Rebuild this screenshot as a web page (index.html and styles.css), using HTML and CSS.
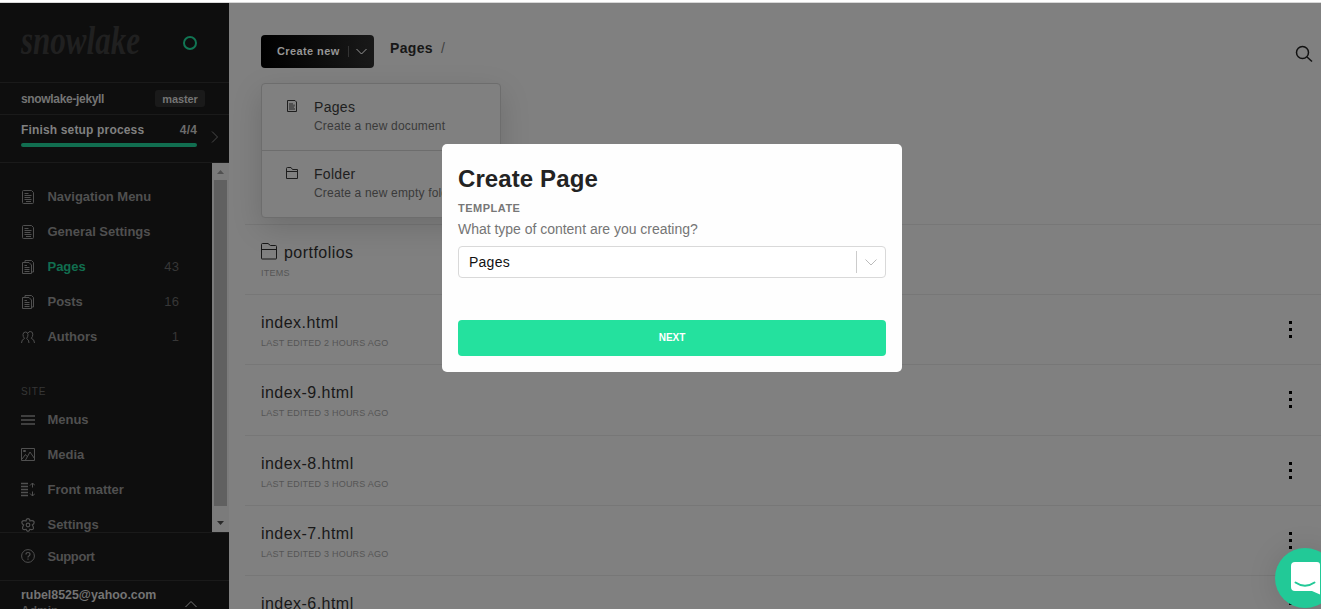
FILE: index.html
```
<!DOCTYPE html>
<html lang="en">
<head>
<meta charset="utf-8">
<title>Create Page</title>
<link rel="stylesheet" href="styles.css">
</head>
<body>
<svg class="defs" width="0" height="0" aria-hidden="true">
  <symbol id="i-doc" viewBox="0 0 14 16"><path d="M1.500 2.500q0-1 1-1h8l2 2v10q0 1-1 1h-9q-1 0-1-1z M3.500 4.500h4 M3.500 6.500h7 M3.500 8.500h6 M3.500 10.500h7 M5 12.500h5"/></symbol>
  <symbol id="i-docs" viewBox="0 0 14 16"><path d="M4 3.500V1.500h6.500l2 2v9.500h-2 M1.500 3.500h6.500l2.500 2.500v8.500h-9z M3.500 6.500h2.500 M3.500 8.500h5 M3.500 10.500h5 M3.500 12.500h5"/></symbol>
  <symbol id="i-folder" viewBox="0 0 18 18"><path d="M1.500 16.500V2.500q0-1 1-1H8l2.500 2h5q1 0 1 1v12q0 .5-.5.500H2q-.5 0-.5-.5z M1.500 7.500h15"/></symbol>
  <symbol id="i-folder-sm" viewBox="0 0 14 14"><path d="M1.500 12.500v-10q0-1 1-1H6l1.500 2h5v9z M1.500 5.500h11"/></symbol>
  <symbol id="i-dots" viewBox="0 0 3 18"><path d="M0 0h3v3H0z M0 7h3v3H0z M0 14h3v3H0z"/></symbol>
</svg>
<div class="app">
  <aside class="sidebar">
    <header class="brand">
      <svg class="logo" width="122" height="36" viewBox="0 0 122 36"><text x="1" y="29" textLength="119" lengthAdjust="spacingAndGlyphs">snowlake</text></svg>
      <span class="ring"></span>
    </header>
    <div class="repo"><span class="repo-name">snowlake-jekyll</span><span class="branch">master</span></div>
    <div class="setup">
      <div class="setup-body">
        <div class="setup-text"><span>Finish setup process</span><span class="count">4/4</span></div>
        <div class="progress"></div>
      </div>
      <svg class="chev" width="8" height="14" viewBox="0 0 8 14"><path d="M1 1.500l5.500 5.500L1 12.500"/></svg>
    </div>
    <div class="nav-wrap">
      <nav class="nav">
        <a class="item"><svg class="ic" width="14" height="16"><use href="#i-doc"/></svg><span>Navigation Menu</span></a>
        <a class="item"><svg class="ic" width="14" height="16"><use href="#i-doc"/></svg><span>General Settings</span></a>
        <a class="item active"><svg class="ic" width="14" height="16"><use href="#i-docs"/></svg><span>Pages</span><em>43</em></a>
        <a class="item"><svg class="ic" width="14" height="16"><use href="#i-docs"/></svg><span>Posts</span><em>16</em></a>
        <a class="item"><svg class="ic" width="14" height="14" viewBox="0 0 14 14"><path d="M.5 13q0-3.500 3-4.500Q1.800 6.500 2 4.500q.2-2.500 2.500-2.500T7 4.500Q7 7 5.600 8.500 8 9.500 8 13 M7 3q.8-1.500 2.300-1.500 2.400 0 2.500 2.700 0 2.500-1.500 4.100 3.200 1 3.200 4.700"/></svg><span>Authors</span><em>1</em></a>
        <h2 class="group">SITE</h2>
        <a class="item"><svg class="ic thick" width="14" height="12" viewBox="0 0 14 12"><path d="M0 2h14M0 6h14M0 10h14"/></svg><span>Menus</span></a>
        <a class="item"><svg class="ic" width="14" height="13" viewBox="0 0 14 13"><path d="M.5.500h13v12H.5z M1 11l3.500-4.500L6 8.500 M4.500 12L9 4l4.500 6.500 M2.500 3.500h2v-1h-2z"/></svg><span>Media</span></a>
        <a class="item"><svg class="ic" width="14" height="15" viewBox="0 0 14 15"><path class="lines" d="M0 1.500h7M0 4.500h7M0 7.500h7M0 10.500h7M0 13.500h7"/><path d="M11.500 5.500V1 M9 3.500L11.500 1 14 3.500 M11.500 9.500V14 M9 11.500l2.500 2.500 2.500-2.500"/></svg><span>Front matter</span></a>
        <a class="item"><svg class="ic gear" width="14" height="14" viewBox="0 0 14 14"><path d="M5 3Q5.300.7 7 .7T9 3q3-.8 4 .7.600 2-1.700 3.300 1.700 2.500 1 3.800-1.300 1.300-3.300.5-.7 2-2 2t-2-2q-2 .8-3.300-.5-.7-1.300 1-3.800Q.400 5.700 1 3.700 2 2.200 5 3z"/><circle cx="7" cy="7" r="1.800"/></svg><span>Settings</span></a>
      </nav>
      <div class="scrollbar">
        <svg width="15" height="17" viewBox="0 0 15 17"><path class="up" d="M4 11h7L7.500 7z"/></svg>
        <div class="thumb"></div>
        <svg width="15" height="26" viewBox="0 0 15 26"><path class="down" d="M4 15h7l-3.500 4z"/></svg>
      </div>
    </div>
    <div class="support"><svg class="ic" width="14" height="14" viewBox="0 0 14 14"><circle cx="7" cy="7" r="6.400"/><path class="q" d="M5 5.500q0-2 2-2t2 1.700Q9 6.300 7.800 7 7 7.400 7 8.500M7 9.500v1.300"/></svg><span>Support</span></div>
    <div class="user"><div><div class="mail">rubel8525@yahoo.com</div><div class="role">Admin</div></div><svg width="12" height="8" viewBox="0 0 12 8"><path d="M.5 7L6 1.500 11.500 7"/></svg></div>
  </aside>
  <main class="main">
    <header class="toolbar">
      <div class="create">
        <button class="create-btn"><span>Create new</span><i></i><svg width="11" height="7" viewBox="0 0 11 7"><path d="M.5 1l5 5 5-5"/></svg></button>
        <div class="menu">
          <div class="menu-item"><svg class="mi-doc" width="14" height="14" viewBox="0 0 14 14"><path d="M2.500 1.500H10l1.500 1.500v9.500h-9z"/><path class="fill" d="M4 4h4v1.500h2v2H9v1.500h1V11H4z"/></svg><div><div class="mt">Pages</div><div class="ms">Create a new document</div></div></div>
          <div class="menu-item"><svg width="14" height="14"><use href="#i-folder-sm"/></svg><div><div class="mt">Folder</div><div class="ms">Create a new empty folder</div></div></div>
        </div>
      </div>
      <div class="crumb"><b>Pages</b><span>/</span></div>
      <svg class="search" width="18" height="18" viewBox="0 0 18 18"><circle cx="7.500" cy="7.500" r="6"/><path d="M12 12l5 4.500"/></svg>
    </header>
    <section class="list">
      <div class="row"><div><div class="title"><svg width="18" height="18"><use href="#i-folder"/></svg>portfolios</div><div class="meta">ITEMS</div></div></div>
      <div class="row"><div><div class="title">index.html</div><div class="meta">LAST EDITED 2 HOURS AGO</div></div><svg class="dots" width="3" height="18"><use href="#i-dots"/></svg></div>
      <div class="row"><div><div class="title">index-9.html</div><div class="meta">LAST EDITED 3 HOURS AGO</div></div><svg class="dots" width="3" height="18"><use href="#i-dots"/></svg></div>
      <div class="row"><div><div class="title">index-8.html</div><div class="meta">LAST EDITED 3 HOURS AGO</div></div><svg class="dots" width="3" height="18"><use href="#i-dots"/></svg></div>
      <div class="row"><div><div class="title">index-7.html</div><div class="meta">LAST EDITED 3 HOURS AGO</div></div><svg class="dots" width="3" height="18"><use href="#i-dots"/></svg></div>
      <div class="row"><div><div class="title">index-6.html</div></div><svg class="dots" width="3" height="18"><use href="#i-dots"/></svg></div>
    </section>
  </main>
</div>
<div class="modal">
  <h1>Create Page</h1>
  <div class="label">TEMPLATE</div>
  <div class="hint">What type of content are you creating?</div>
  <div class="select"><span>Pages</span><i></i><svg width="12" height="7" viewBox="0 0 12 7"><path d="M.5.500L6 6 11.500.500"/></svg></div>
  <button class="next">NEXT</button>
</div>
<div class="chat"><svg width="30" height="34" viewBox="0 0 30 34"><path class="bubble" d="M4 0h22q3 0 3 3v29.500L21 29H4q-4 0-4-4V4q0-4 4-4z"/><path class="smile" d="M4.500 20.500q9.500 6.500 19 0"/></svg></div>
</body>
</html>
```

FILE: styles.css
```
* { box-sizing: border-box; }
body { margin: 0; height: 609px; overflow: hidden; position: relative; background: #808080; font-family: "Liberation Sans", Arial, sans-serif; }
svg { display: block; flex: none; fill: none; stroke: currentColor; }
button { border: 0; font-family: inherit; }
.defs { position: absolute; }
.app { display: flex; height: 609px; border-top: 2px solid #fff; overflow: hidden; }
.sidebar { width: 229px; flex: none; display: flex; flex-direction: column; background: #0e0e0e; border-top: 1px solid #d8d8d8; color: #505050; }
.brand { height: 80px; flex: none; display: flex; justify-content: space-between; padding: 22px 32px 0 20px; border-bottom: 1px solid #1a1a1a; }
.logo { overflow: visible; color: #202020; }
.logo text { font: italic bold 40px "Liberation Serif", serif; fill: currentColor; stroke: none; }
.ring { width: 14px; height: 14px; margin-top: 11px; border: 2px solid #117553; border-radius: 50%; }
.repo { height: 32px; flex: none; display: flex; align-items: center; justify-content: space-between; padding: 0 24px 0 21px; border-bottom: 1px solid #1a1a1a; font-weight: bold; color: #747474; }
.repo-name { font-size: 12px; letter-spacing: -.33px; }
.branch { width: 50px; height: 17px; border-radius: 3px; background: #1a1a1a; text-align: center; font-size: 11px; line-height: 18px; letter-spacing: -.1px; }
.setup { height: 48px; flex: none; display: flex; padding: 8px 10px 0 21px; border-bottom: 1px solid #1a1a1a; }
.setup-body { width: 176px; }
.setup-text { display: flex; justify-content: space-between; font-size: 12px; line-height: 15px; font-weight: bold; letter-spacing: .16px; color: #808080; }
.count { color: #6c6c6c; }
.progress { height: 4px; margin-top: 5px; border-radius: 2px; background: #116e50; }
.chev { margin: 7px 0 0 14px; color: #484848; }
.nav-wrap { height: 369px; flex: none; display: flex; overflow: hidden; }
.nav { width: 212px; padding: 16px 33px 0 21px; }
.item { display: flex; align-items: center; height: 35px; gap: 12.500px; font-size: 13px; font-weight: bold; }
.item span, .support span { letter-spacing: -.02px; }
.item em { margin-left: auto; font-style: normal; font-weight: normal; font-size: 13px; letter-spacing: .1px; color: #373737; }
.item.active span { color: #116e50; }
.ic.thick { stroke-width: 1.500; }
.ic.gear, .ic .q { stroke-width: 1.200; }
.lines { stroke-width: 1.500; }
.group { height: 34px; margin: 14px 0 0; font-size: 10px; line-height: 48px; font-weight: normal; letter-spacing: .7px; color: #363636; }
.scrollbar { width: 17px; padding: 0 2px; background: #7b7b7b; }
.scrollbar svg { margin-left: -1px; stroke: none; }
.thumb { width: 13px; height: 326px; background: #606060; }
.up { fill: #515151; }
.down { fill: #292929; }
.support { height: 49px; flex: none; display: flex; align-items: center; gap: 12.500px; padding: 0 0 1px 21px; border-top: 1px solid #1a1a1a; border-bottom: 1px solid #1a1a1a; font-size: 13px; font-weight: bold; }
.support span { letter-spacing: -.4px; }
.user { display: flex; justify-content: space-between; padding: 7px 32px 0 21px; font-size: 12px; line-height: 15px; font-weight: bold; color: #747474; }
.user svg { margin-top: 12px; }
.mail { font-size: 12.400px; white-space: nowrap; }
.role { color: #505050; line-height: 16px; }
.main { flex: 1; min-width: 0; display: flex; flex-direction: column; border-top: 1px solid #d8d8d8; }
.toolbar { height: 221px; flex: none; display: flex; align-items: flex-start; padding: 32px 8px 0 32px; }
.create { position: relative; width: 113px; }
.create-btn { display: flex; align-items: center; width: 113px; height: 33px; padding: 0 7px 1px 16px; border-radius: 4px; background: linear-gradient(90deg, #000, #191919); color: #969696; font-size: 11px; font-weight: bold; letter-spacing: .4px; white-space: nowrap; }
.create-btn i { width: 1px; height: 11px; margin: 0 7px 0 8px; flex: none; background: #333; }
.menu { position: absolute; z-index: 2; top: 48px; left: 0; width: 240px; height: 135px; border: 1px solid #6d6d6d; border-radius: 4px; background: #808080; box-shadow: 0 10px 30px rgba(0,0,0,.15); }
.menu-item { display: flex; height: 66px; padding: 15px 0 0 23px; color: #1e1e1e; }
.menu-item + .menu-item { border-top: 1px solid #6d6d6d; }
.menu-item > svg { margin: 0 15px 0 0; }
.mi-doc .fill { fill: #505050; stroke: none; }
.mt { font-size: 14px; line-height: 17px; letter-spacing: .3px; }
.ms { margin-top: 2px; font-size: 12px; line-height: 16px; letter-spacing: .18px; color: #3a3a3a; white-space: nowrap; }
.crumb { display: flex; gap: 8px; margin: 5px auto 0 16px; font-size: 14px; line-height: 17px; letter-spacing: .35px; color: #171717; }
.crumb span { color: #404040; }
.search { margin-top: 10px; stroke-width: 1.500; color: #111; }
.list { padding-left: 16px; }
.row { display: flex; justify-content: space-between; height: 70.200px; padding: 18px 29px 0 16px; border-top: 1px solid #777; }
.row > svg { margin-top: 8px; }
.title { display: flex; align-items: center; gap: 6px; height: 20px; font-size: 16px; letter-spacing: .46px; color: #181818; }
.title svg { margin: -5px 0 0 -1px; }
.title svg + * { margin-left: 1px; }
.meta { margin-top: 5px; font-size: 9px; line-height: 11px; letter-spacing: .22px; color: #555; }
.dots { color: #000; fill: currentColor; stroke: none; }
.modal { position: absolute; z-index: 5; left: 442px; top: 144px; width: 460px; height: 228px; padding: 20px 16px 16px; border-radius: 5px; background: #fefefe; }
.modal h1 { margin: 0; font-size: 24px; line-height: 30px; letter-spacing: .1px; color: #232323; }
.label { margin-top: 7px; font-size: 11px; line-height: 14px; font-weight: bold; letter-spacing: .5px; color: #777; }
.hint { margin-top: 6px; font-size: 14px; line-height: 16px; letter-spacing: -.02px; color: #757575; }
.select { display: flex; align-items: center; height: 32px; margin-top: 9px; padding: 0 8px 0 10px; border: 1px solid #d9d9d9; border-radius: 4px; background: #fff; font-size: 14px; letter-spacing: .25px; color: #111; }
.select i { width: 1px; height: 22px; margin: 0 8px 0 auto; background: #ccc; }
.select svg { color: #bbb; }
.next { display: block; width: 428px; height: 36px; margin-top: 42px; padding: 0 0 1px; border-radius: 4px; background: #24e19e; color: #fff; font-size: 10px; font-weight: bold; letter-spacing: 0; }
.chat { position: absolute; z-index: 6; left: 1275px; top: 548px; width: 60px; height: 60px; padding: 14px 0 0 16px; border-radius: 50%; background: #22c997; box-shadow: 0 2px 30px rgba(0,0,0,.12); }
.bubble { fill: #fff; stroke: none; }
.smile { stroke: #22c997; stroke-width: 2; stroke-linecap: round; }
```
